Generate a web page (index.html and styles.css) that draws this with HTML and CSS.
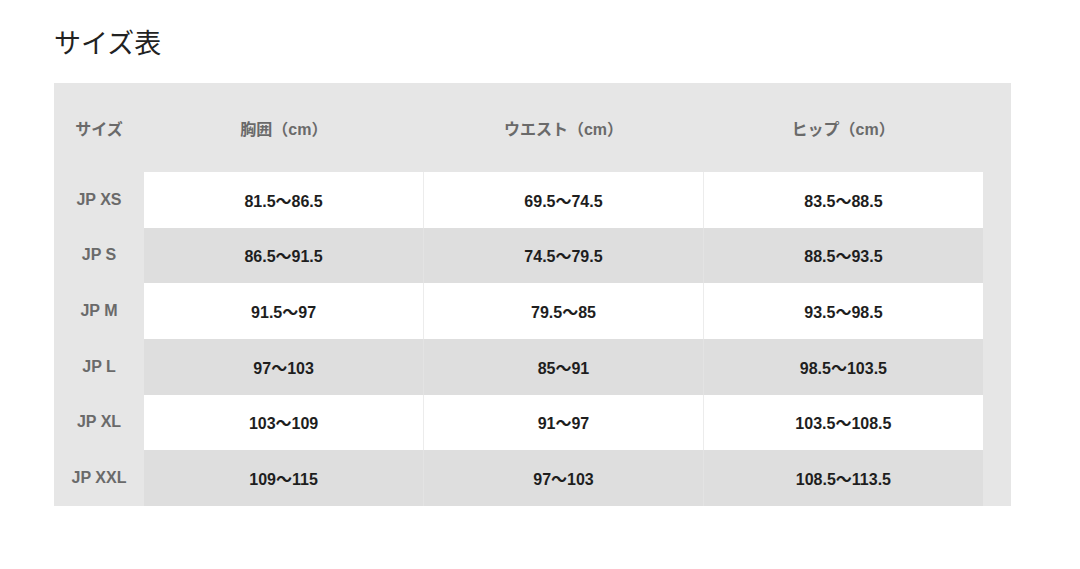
FILE: index.html
```html
<!DOCTYPE html>
<html lang="ja">
<head>
<meta charset="utf-8">
<title>サイズ表</title>
<link rel="stylesheet" href="styles.css">
</head>
<body>
<main class="page">
  <h1 class="title">サイズ表</h1>
  <div class="chart">
    <table class="size-table">
      <thead>
        <tr>
          <th class="label">サイズ</th>
          <th>胸囲（cm）</th>
          <th>ウエスト（cm）</th>
          <th>ヒップ（cm）</th>
        </tr>
      </thead>
      <tbody>
        <tr class="odd"><th class="label">JP XS</th><td>81.5～86.5</td><td>69.5～74.5</td><td>83.5～88.5</td></tr>
        <tr class="even"><th class="label">JP S</th><td>86.5～91.5</td><td>74.5～79.5</td><td>88.5～93.5</td></tr>
        <tr class="odd"><th class="label">JP M</th><td>91.5～97</td><td>79.5～85</td><td>93.5～98.5</td></tr>
        <tr class="even"><th class="label">JP L</th><td>97～103</td><td>85～91</td><td>98.5～103.5</td></tr>
        <tr class="odd"><th class="label">JP XL</th><td>103～109</td><td>91～97</td><td>103.5～108.5</td></tr>
        <tr class="even"><th class="label">JP XXL</th><td>109～115</td><td>97～103</td><td>108.5～113.5</td></tr>
      </tbody>
    </table>
  </div>
</main>
</body>
</html>
```
FILE: styles.css
```css
html, body {
  margin: 0;
  padding: 0;
  background: #ffffff;
}
body {
  font-family: "Liberation Sans", Arial, "Noto Sans CJK JP", sans-serif;
  color: #222;
}
.page {
  padding: 23px 0 0 54px;
}
.title {
  margin: 0 0 23px 0;
  font-family: "Noto Sans CJK JP", sans-serif;
  font-weight: 400;
  font-size: 27px;
  line-height: 37px;
  color: #222;
  letter-spacing: 0;
}
.chart {
  width: 929px;
  padding-right: 28px;
  background: #e6e6e6;
}
.size-table {
  width: 929px;
  border-collapse: collapse;
  table-layout: fixed;
  font-size: 16px;
  font-weight: 700;
}
.size-table th,
.size-table td {
  padding: 0;
  text-align: center;
  vertical-align: middle;
}
.size-table thead th {
  height: 89px;
  color: #6a6a6a;
  background: #e6e6e6;
  font-weight: 700;
}
.size-table thead th.label {
  width: 90px;
}
.size-table tbody tr {
  height: 55.67px;
}
.size-table th.label {
  color: #6a6a6a;
  background: #e6e6e6;
  font-weight: 700;
}
.size-table td {
  color: #1e1e1e;
}
.size-table tr.odd td {
  background: #ffffff;
}
.size-table tr.odd td + td {
  border-left: 1px solid #ececec;
}
.size-table tr.even td {
  background: #dedede;
}
.size-table tr.even td + td {
  border-left: 1px solid #e3e3e3;
}
```
